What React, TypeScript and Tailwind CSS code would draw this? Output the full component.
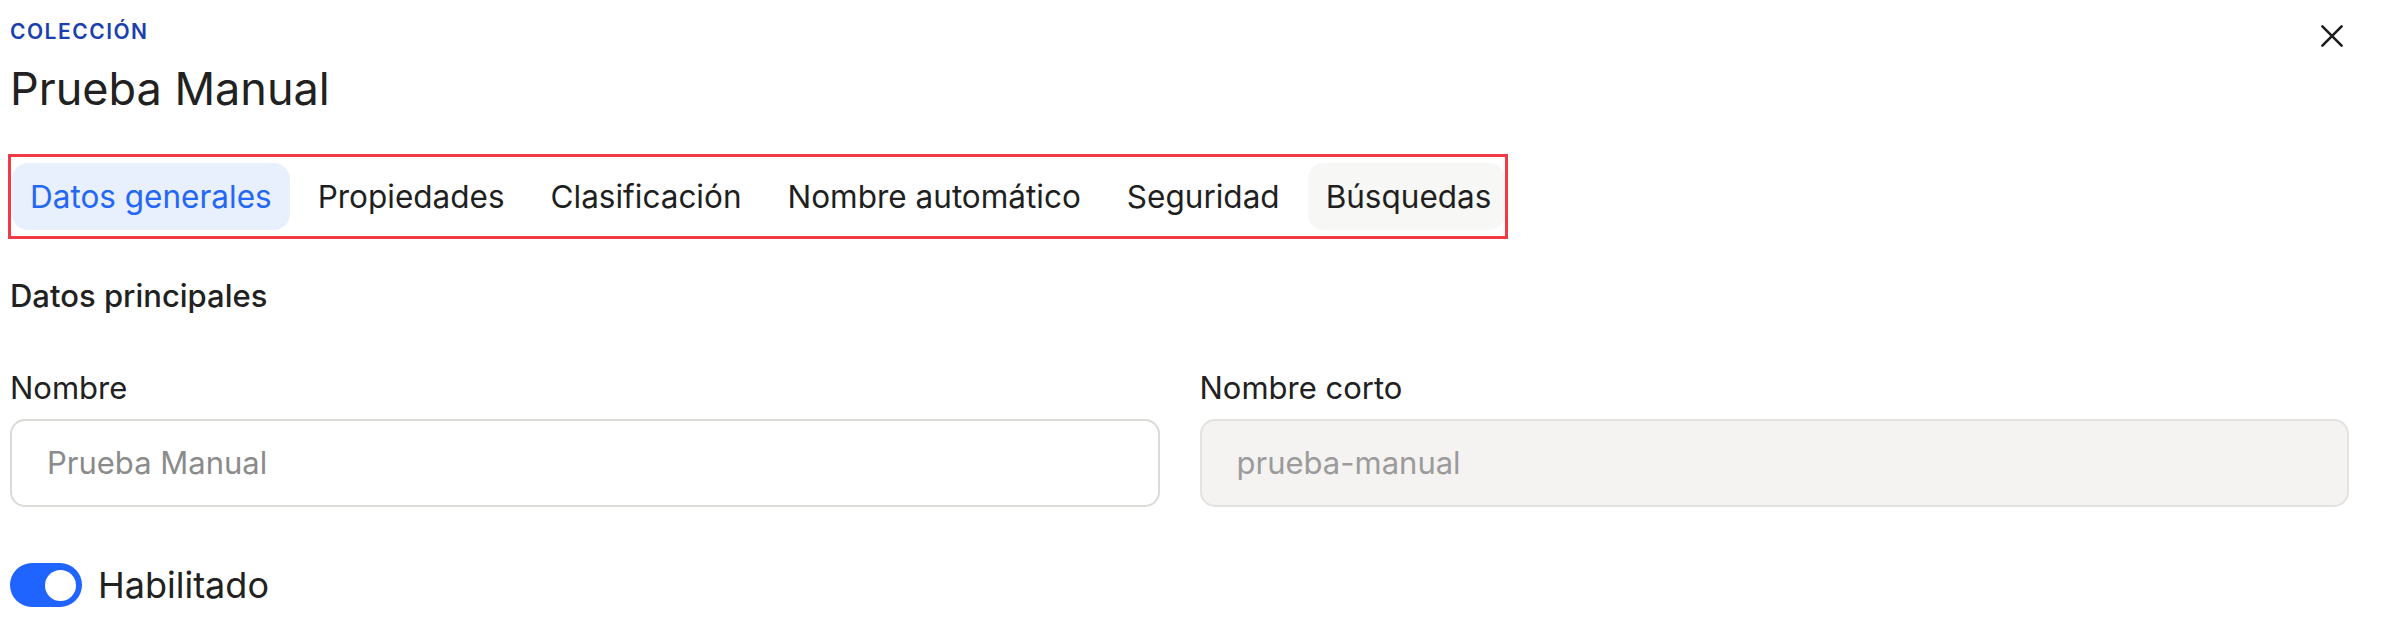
import React from "react";

const tabs = [
  "Datos generales",
  "Propiedades",
  "Clasificación",
  "Nombre automático",
  "Seguridad",
  "Búsquedas",
];

export default function App() {
  return (
    <div className="w-[2388px] h-[628px] bg-white pl-[10px] pr-[39px] font-['Inter',sans-serif] text-[#1f1f1f] overflow-hidden">
      <div className="flex justify-between items-start">
        <div>
          <div className="mt-[20px] text-[21px] leading-[24px] font-semibold tracking-[1.5px] text-[#1c3fae]">
            COLECCIÓN
          </div>
          <h1 className="mt-[17px] text-[45px] leading-[56px] font-normal text-[#212121]">
            Prueba Manual
          </h1>
        </div>
        <button className="mt-[24px] mr-[5px] w-[24px] h-[24px] text-[#1f1f1f]" aria-label="Cerrar">
          <svg width="24" height="24" viewBox="0 0 24 24" fill="none">
            <path d="M2.4 2.4 21.6 21.6M21.6 2.4 2.4 21.6" stroke="currentColor" strokeWidth="2.7" strokeLinecap="round" />
          </svg>
        </button>
      </div>

      <div className="mt-[37px] -ml-[2px] flex w-fit gap-[10px] border-[3px] border-[#f03a47] py-[6px] pl-[1px] pr-0">
        {tabs.map((t, i) => (
          <div
            key={t}
            className={
              i === 0
                ? "h-[67px] flex items-center px-[18px] rounded-[16px] bg-[#e8effd] text-[#2466f5] text-[31.5px] leading-[37px]"
                : i === tabs.length - 1
                ? "h-[67px] flex items-center pl-[18px] pr-[14px] rounded-[16px] bg-[#f7f7f5] text-[#1f1f1f] text-[31.5px] leading-[37px]"
                : "h-[67px] flex items-center px-[18px] rounded-[16px] text-[#1f1f1f] text-[31.5px] leading-[37px]"
            }
          >
            {t}
          </div>
        ))}
      </div>

      <h2 className="mt-[39px] text-[31px] leading-[36px] font-medium text-[#212121]">
        Datos principales
      </h2>

      <div className="mt-[56px] grid grid-cols-2 gap-[40px]">
        <div>
          <div className="text-[31px] leading-[36px] text-[#212121]">Nombre</div>
          <div className="mt-[13px] h-[88px] rounded-[15px] border-2 border-[#dcdad6] bg-white flex items-center px-[35px] text-[31px] text-[#8b8b8b]">
            Prueba Manual
          </div>
        </div>
        <div>
          <div className="text-[31px] leading-[36px] text-[#212121]">Nombre corto</div>
          <div className="mt-[13px] h-[88px] rounded-[15px] border-2 border-[#e4e2de] bg-[#f4f3f1] flex items-center px-[35px] text-[31px] text-[#9b9b9b]">
            prueba-manual
          </div>
        </div>
      </div>

      <div className="mt-[56px] flex items-center gap-[16px]">
        <div className="w-[72px] h-[44px] rounded-full bg-[#1f64ff] flex items-center justify-end pr-[6px]">
          <div className="w-[31px] h-[31px] rounded-full bg-white" />
        </div>
        <span className="text-[36px] leading-[40px] text-[#212121]">Habilitado</span>
      </div>
    </div>
  );
}
